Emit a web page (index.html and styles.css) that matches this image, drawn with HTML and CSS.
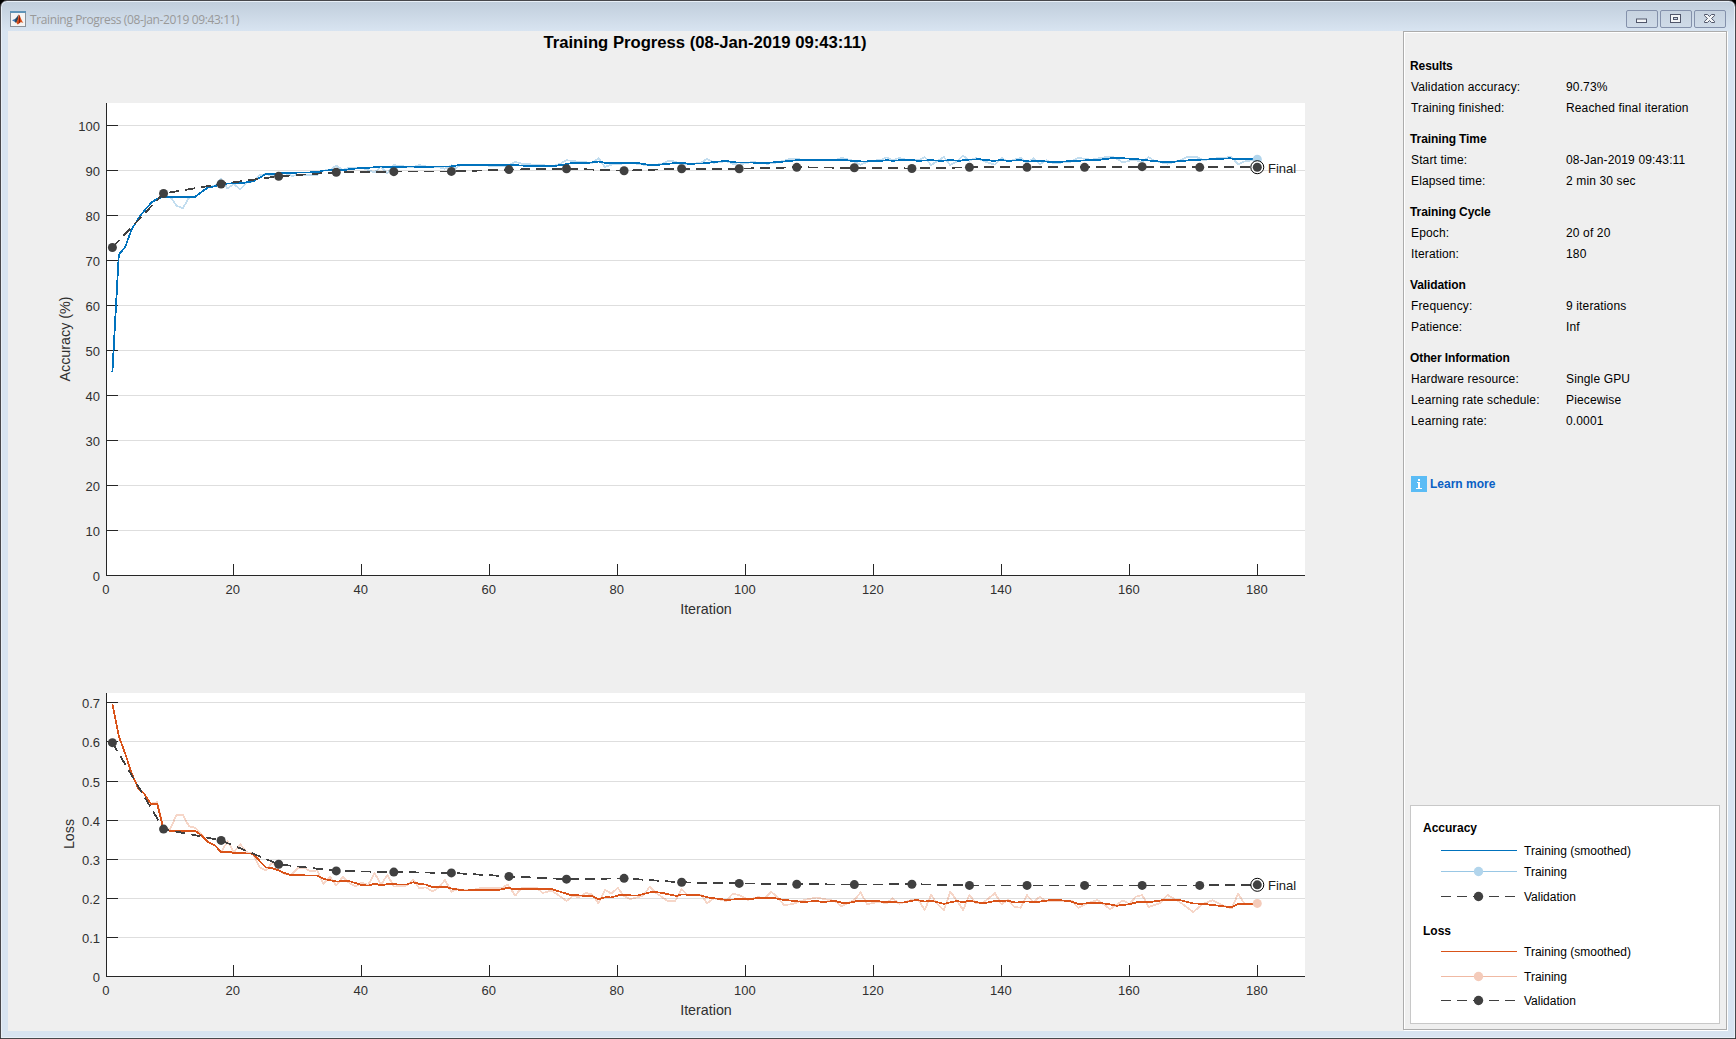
FILE: index.html
```html
<!DOCTYPE html>
<html lang="en">
<head>
    <meta charset="UTF-8">
    <title>Training Progress (08-Jan-2019 09:43:11)</title>
    <link rel="stylesheet" href="styles.css">
</head>
<body>
    <div class="window">
        <header class="titlebar">
            <svg class="app-icon" width="16" height="16" viewBox="0 0 16 16">
                <rect x="0.5" y="0.5" width="15" height="15" fill="#f4f4f4" stroke="#8a9199"/>
                <rect x="0" y="0" width="16" height="2" fill="#5f94b8"/>
                <path d="M2 9.2 5.3 7.8 7 9 5 11z" fill="#3b76b5"/>
                <path d="M5.3 7.8C6.8 7 7.4 4.5 8.8 3.6L8 9 6 12 5 11z" fill="#27475f"/>
                <path d="M8.8 3.6C10.3 4.2 11 9.5 13.4 12 12 11.4 11.3 10.6 10 11.6 9 12.5 8.6 13.4 7.6 13.4L6.2 11.6C7.6 10 8.2 6.5 8.8 3.6z" fill="#d9531e"/>
                <path d="M9 4C9.8 5 10.4 8 10.2 11.4L8.6 12.4C9.2 9.5 9 7 9 4z" fill="#8c1f10"/>
            </svg>
            <span class="caption">Training Progress (08-Jan-2019 09:43:11)</span>
            <div class="controls">
                <button type="button"><svg width="30" height="16"><rect x="9.5" y="8" width="10" height="3.5" fill="#f3f5f7" stroke="#50566a"/></svg></button>
                <button type="button"><svg width="30" height="16"><rect x="9.5" y="3.5" width="10" height="8" fill="#f3f5f7" stroke="#50566a"/><rect x="12.5" y="6.5" width="4" height="2" fill="#c9d5e2" stroke="#50566a"/></svg></button>
                <button type="button"><svg width="30" height="16"><path d="M9.5 3.5h3l2 2 2-2h3v1.2l-3 2.8 3 2.8v1.2h-3l-2-2-2 2h-3v-1.2l3-2.8-3-2.8z" fill="#f3f5f7" stroke="#50566a"/></svg></button>
            </div>
        </header>

        <div class="client">
            <main class="plots">
                <svg id="accuracy" width="1395" height="600" viewBox="8 31 1395 600">
                    <text class="plot-title" x="705" y="47.5" textLength="323" lengthAdjust="spacingAndGlyphs">Training Progress (08-Jan-2019 09:43:11)</text>
                </svg>
                <svg id="loss" width="1395" height="400" viewBox="8 631 1395 400"></svg>
            </main>

            <aside class="panel">
                <section class="group">
                    <h2>Results</h2>
                    <dl>
                        <dt>Validation accuracy:</dt><dd>90.73%</dd>
                        <dt>Training finished:</dt><dd>Reached final iteration</dd>
                    </dl>
                </section>
                <section class="group">
                    <h2>Training Time</h2>
                    <dl>
                        <dt>Start time:</dt><dd>08-Jan-2019 09:43:11</dd>
                        <dt>Elapsed time:</dt><dd>2 min 30 sec</dd>
                    </dl>
                </section>
                <section class="group">
                    <h2>Training Cycle</h2>
                    <dl>
                        <dt>Epoch:</dt><dd>20 of 20</dd>
                        <dt>Iteration:</dt><dd>180</dd>
                    </dl>
                </section>
                <section class="group">
                    <h2>Validation</h2>
                    <dl>
                        <dt>Frequency:</dt><dd>9 iterations</dd>
                        <dt>Patience:</dt><dd>Inf</dd>
                    </dl>
                </section>
                <section class="group">
                    <h2>Other Information</h2>
                    <dl>
                        <dt>Hardware resource:</dt><dd>Single GPU</dd>
                        <dt>Learning rate schedule:</dt><dd>Piecewise</dd>
                        <dt>Learning rate:</dt><dd>0.0001</dd>
                    </dl>
                </section>

                <a class="learn-more" href="#">
                    <svg width="16" height="16">
                        <rect width="16" height="16" fill="#5bbcf5"/>
                        <path d="M7 3h2v2H7zM6 6h3v6h2v1H5v-1h2V7H6z" fill="#fff"/>
                    </svg>
                    Learn more
                </a>

                <div class="legend">
                    <h3>Accuracy</h3>
                    <div class="item">
                        <svg width="76" height="11"><path class="line blue" d="M0 5.5H76"/></svg>
                        Training (smoothed)
                    </div>
                    <div class="item">
                        <svg width="76" height="11"><path class="line light-blue" d="M0 5.5H76"/><circle cx="37.5" cy="5.5" r="4.7" fill="#b2d5ec"/></svg>
                        Training
                    </div>
                    <div class="item tall">
                        <svg width="76" height="11"><path class="line dashed" d="M0 5.5H74"/><circle cx="37.5" cy="5.5" r="4.7" fill="#404040"/></svg>
                        Validation
                    </div>
                    <h3 class="second">Loss</h3>
                    <div class="item">
                        <svg width="76" height="11"><path class="line orange" d="M0 5.5H76"/></svg>
                        Training (smoothed)
                    </div>
                    <div class="item tall">
                        <svg width="76" height="11"><path class="line light-orange" d="M0 5.5H76"/><circle cx="37.5" cy="5.5" r="4.7" fill="#f4cbba"/></svg>
                        Training
                    </div>
                    <div class="item last">
                        <svg width="76" height="11"><path class="line dashed" d="M0 5.5H74"/><circle cx="37.5" cy="5.5" r="4.7" fill="#404040"/></svg>
                        Validation
                    </div>
                </div>
            </aside>
        </div>
    </div>
    <script src="charts.js"></script>
</body>
</html>
```
FILE: styles.css
```css
* {
    margin: 0;
    padding: 0;
    box-sizing: border-box;
}

body {
    background: #000;
    font-family: "Liberation Sans", Arial, sans-serif;
    font-size: 12px;
    color: #000;
    overflow: hidden;
}

.window {
    width: 1736px;
    height: 1039px;
    padding: 0 7px 7px;
    border: 1px solid #47474b;
    border-radius: 7px 7px 0 0;
    background: linear-gradient(#c0cddb, #d8e4f1 30px);
    box-shadow: inset 0 0 0 1px #e8eff7;
}

.titlebar {
    display: flex;
    align-items: center;
    height: 30px;
    padding: 8px 2px 2px;
}

.caption {
    flex: 1;
    margin-left: 4px;
    padding-top: 1px;
    font-family: "Open Sans", sans-serif;
    font-size: 12px;
    letter-spacing: -0.38px;
    color: #999;
}

.controls {
    display: flex;
    gap: 2px;
}

.controls button {
    width: 32px;
    height: 18px;
    border: 1px solid #8491ab;
    border-radius: 2px;
    background: linear-gradient(#c7d3e0, #cfdbe8);
}

.controls svg {
    display: block;
}

.client {
    display: flex;
    height: 1000px;
    background: #efefef;
}

.plots {
    width: 1395px;
}

.plots > svg {
    display: block;
}

.plots text {
    font-size: 13px;
    fill: #303030;
}

.plots .plot-title {
    font-size: 16px;
    font-weight: bold;
    fill: #000;
    text-anchor: middle;
}

.plots .axis-label {
    font-size: 14.3px;
    text-anchor: middle;
}

.plots .final {
    fill: #202020;
}

.grid {
    stroke: #dedede;
    shape-rendering: crispEdges;
}

.axis {
    fill: none;
    stroke: #262626;
    shape-rendering: crispEdges;
}

.series {
    fill: none;
    stroke-width: 1.8;
    stroke-linejoin: round;
    shape-rendering: crispEdges;
}

/* Side panel */
.panel {
    display: flex;
    flex-direction: column;
    width: 324px;
    margin-bottom: 1px;
    padding: 24px 6px 5px;
    border: 1px solid #acacac;
    box-shadow: inset 1px 1px 0 #fff, 1px 1px 0 #fff;
}

.group {
    margin-bottom: 10px;
    line-height: 21px;
}

.group h2 {
    font-size: 12px;
    line-height: 21px;
    letter-spacing: -0.1px;
}

.group dl {
    display: grid;
    grid-template-columns: 155px 1fr;
    padding-left: 1px;
    letter-spacing: 0.14px;
}

.learn-more {
    display: flex;
    align-items: center;
    gap: 3px;
    height: 16px;
    margin: 34px 0 0 1px;
    font-weight: bold;
    color: #0a5fc4;
    text-decoration: none;
}

.legend {
    width: 310px;
    height: 219px;
    margin-top: auto;
    border: 1px solid #c8c8c8;
    background: #fff;
}

.legend h3 {
    height: 34px;
    padding: 10px 0 0 12px;
    font-size: 12px;
    line-height: 24px;
}

.legend .second {
    height: 30px;
    line-height: 20px;
}

.item {
    display: flex;
    align-items: center;
    gap: 7px;
    height: 21px;
    padding-left: 30px;
}

.item.tall {
    height: 29px;
}

.item.last {
    height: 19px;
}

.line {
    stroke-width: 1;
    shape-rendering: crispEdges;
}

.blue {
    stroke: #0072bd;
}

.light-blue {
    stroke: #99c7e5;
}

.orange {
    stroke: #d95319;
}

.light-orange {
    stroke: #f0b9a3;
}

.dashed {
    stroke: #404040;
    stroke-dasharray: 10 6;
}
```
FILE: charts.js
```js
// Series are flat lists: iteration, value, iteration, value, ...
var accuracySmoothed = [
    1, 45.3, 2, 71.3, 3, 73, 4, 76.9, 5.4, 80, 6.3, 81.6, 7.2, 83, 8, 83.7, 9, 84.2, 14, 84.2, 15, 85.3, 16, 86.3, 17, 86.5,
    18, 86.9, 19, 87.1, 21.6, 87.3, 23, 87.6, 24, 88.4, 25, 89.2, 26.5, 89.3, 28, 89.5, 33, 89.6, 34, 90, 37, 90.1,
    39, 90.45, 42, 90.7, 43, 90.9, 44, 90.7, 48, 90.9, 49, 90.7, 52, 90.9, 54, 90.9, 55.5, 91.3, 57, 91.2, 60, 91.2,
    62.6, 91.3, 65, 91.1, 70, 91, 72, 91.4, 73, 91.7, 75.5, 91.7, 77, 92, 78, 91.7, 83.4, 91.6, 85, 91.2, 86.5, 91.3,
    88.6, 91.6, 90, 91.7, 91, 91.5, 94, 91.6, 95, 91.9, 97, 92.1, 98.5, 91.8, 103.5, 91.7, 106, 92, 108, 92.3,
    114.7, 92.4, 116.3, 92.2, 118.3, 92, 121, 92.1, 122, 92.3, 123, 92.15, 125.4, 92.4, 127, 92.15, 129, 92.3,
    130.5, 92.15, 132, 92.3, 133.5, 92.15, 134.5, 92.4, 136.6, 92.5, 138.7, 92.15, 140, 92.3, 141, 92.15, 143, 92.3,
    144.4, 92, 146, 92.15, 148, 91.85, 151.7, 92.15, 153.8, 92.3, 155.4, 92.4, 157.7, 92.8, 160.6, 92.6, 163.2, 92.2,
    166, 91.8, 168.4, 92.15, 170.7, 92.4, 173, 92.5, 175.7, 92.7, 177, 92.5, 180, 92.5
];

var accuracyRaw = [
    10, 84.3, 11, 82.2, 12, 81.6, 13, 84, 14, 84.2, 15, 85.3, 16, 86.3, 17, 86.6, 18, 88.1, 19, 86, 20, 87, 21, 85.8,
    22, 87.3, 23, 87.6, 24, 89, 25, 89.2, 26, 88.8, 27, 89.5, 28, 89.4, 29, 88.8, 30, 89, 33, 89, 34, 90, 35, 90.1, 36, 91.1,
    37, 90.1, 38, 90.6, 40, 90.6, 41, 90.1, 42, 89.6, 43, 90.8, 44, 89.4, 45, 91.2, 46, 91, 48, 90.7, 49, 91.2, 50, 90.9,
    52, 90.7, 53, 90.4, 54, 91.2, 54.6, 90.5, 55.5, 91.2, 62.8, 91, 64, 91.9, 65, 91.5, 70, 91, 71, 91.5, 72, 92.3, 74, 91.9,
    76, 91.7, 77, 92.7, 78, 90.8, 79, 91.3, 82, 91.7, 84, 91.3, 85.5, 91.2, 87, 91.5, 88, 92.15, 89, 92, 90, 91.3,
    91.2, 91.4, 93, 91.7, 94, 92.6, 95, 91.7, 97, 92.1, 98, 91.5, 99, 91.3, 101, 91.9, 103.5, 91.5, 105, 91.8,
    107, 92.6, 108, 92.6, 109, 92.3, 114, 92.3, 115, 92.8, 116.8, 92.15, 118, 91.3, 119.4, 92.15, 121, 92.3,
    122, 92.9, 123, 92.3, 124, 92.8, 125.4, 92.3, 127, 92.3, 128, 93, 129, 91.2, 131, 93, 132, 91.2, 133, 92, 134, 93.3,
    135, 92.15, 136, 92.8, 137.6, 91.9, 139, 91.3, 140, 92.8, 141, 92, 143, 92.8, 144, 91.7, 145, 92.7, 146, 91.4,
    147, 92.3, 148, 91.7, 150.6, 91.8, 152, 92.8, 154, 92.4, 156, 92.9, 157.5, 93, 159, 91.8, 160.6, 92.4, 162, 91.9,
    163, 92.9, 164, 92.15, 166, 91.5, 168, 92.3, 169, 93, 170.5, 93, 171.5, 92.3, 173.6, 92.7, 176, 93, 177, 91.4,
    178, 92, 180, 92.5
];

var accuracyValidation = [
    1, 72.9, 9, 84.9, 18, 87, 27, 88.7, 36, 89.6, 45, 89.75, 54, 89.8, 63, 90.2, 72, 90.4, 81, 89.95, 90, 90.4, 99, 90.4,
    108, 90.7, 117, 90.6, 126, 90.45, 135, 90.7, 144, 90.7, 153, 90.7, 162, 90.85, 171, 90.7, 180, 90.73
];

var lossSmoothed = [
    1, 0.698, 2, 0.615, 3, 0.57, 4, 0.52, 5, 0.482, 6, 0.467, 7, 0.442, 8, 0.442, 9, 0.377, 10, 0.372, 14, 0.372, 15, 0.36,
    16, 0.343, 17, 0.336, 18, 0.318, 19, 0.3195, 20, 0.316, 23, 0.314, 24, 0.296, 25, 0.279, 26, 0.277, 27, 0.271,
    28, 0.264, 29, 0.259, 33, 0.258, 34, 0.2495, 36, 0.243, 38, 0.244, 40, 0.234, 41, 0.2325, 42, 0.2375, 43, 0.233,
    44, 0.236, 47, 0.235, 48, 0.241, 49, 0.237, 50, 0.235, 51, 0.229, 53, 0.23, 54, 0.225, 56, 0.22, 58.5, 0.221,
    61.5, 0.222, 62.8, 0.2265, 64, 0.223, 69.6, 0.224, 71, 0.217, 72.5, 0.209, 76, 0.205, 77, 0.198, 78.2, 0.203,
    79, 0.202, 80.3, 0.2085, 83, 0.207, 85.5, 0.217, 87, 0.2135, 89.2, 0.206, 90, 0.21, 92.8, 0.208, 94, 0.2025,
    97, 0.196, 99, 0.198, 100.6, 0.198, 102.2, 0.201, 104.3, 0.201, 105.8, 0.1965, 109, 0.1905, 111, 0.193, 112, 0.1905,
    114, 0.193, 115.2, 0.188, 116.3, 0.189, 117.8, 0.194, 120.4, 0.194, 121.5, 0.1905, 124.6, 0.189, 126.7, 0.196,
    128, 0.1915, 129, 0.194, 131, 0.186, 133, 0.193, 134, 0.19, 135, 0.194, 137, 0.187, 138.7, 0.192, 140.8, 0.194,
    142.3, 0.189, 144, 0.192, 145.4, 0.19, 148, 0.1965, 150.6, 0.193, 152, 0.1855, 154.8, 0.189, 156.4, 0.186,
    158, 0.181, 160, 0.185, 161.6, 0.1915, 163.7, 0.1915, 165.8, 0.1965, 168, 0.195, 170, 0.187, 171.5, 0.186,
    172.5, 0.184, 176, 0.177, 177, 0.186, 178, 0.185, 180, 0.186
];

var lossRaw = [
    7, 0.442, 8, 0.446, 9, 0.377, 10, 0.377, 11, 0.412, 12, 0.413, 13, 0.384, 14, 0.38, 15, 0.362, 16, 0.343, 17, 0.336,
    18, 0.318, 19, 0.346, 20, 0.318, 21, 0.338, 22, 0.318, 23, 0.314, 24, 0.28, 25, 0.271, 26, 0.292, 27, 0.272,
    28, 0.262, 29, 0.26, 30, 0.278, 31, 0.278, 32, 0.269, 33, 0.271, 34, 0.237, 35, 0.255, 36, 0.2325, 37, 0.255,
    38, 0.24, 39, 0.23, 40, 0.24, 41, 0.234, 42, 0.265, 43, 0.234, 44, 0.26, 45, 0.23, 47, 0.2325, 48, 0.248,
    49, 0.2255, 50, 0.228, 51, 0.218, 52, 0.2265, 53, 0.247, 54, 0.217, 55, 0.223, 57, 0.22, 58.7, 0.227, 62, 0.227,
    62.8, 0.235, 64, 0.207, 65, 0.227, 67.3, 0.227, 68.3, 0.2135, 69.6, 0.22, 70.7, 0.2085, 72, 0.193, 73, 0.206,
    74, 0.203, 75, 0.2135, 76, 0.21, 77, 0.187, 78, 0.222, 79, 0.212, 80, 0.2265, 81, 0.206, 82, 0.198, 84, 0.207,
    85, 0.23, 86, 0.2135, 87.8, 0.193, 89, 0.193, 90, 0.223, 91, 0.208, 93, 0.21, 94, 0.187, 95, 0.2, 97, 0.193,
    98, 0.212, 99, 0.208, 100.4, 0.196, 102, 0.203, 103, 0.2, 104, 0.217, 105, 0.202, 106, 0.183, 107.4, 0.185,
    108.5, 0.193, 111, 0.202, 114, 0.193, 115, 0.179, 117, 0.196, 118, 0.215, 119, 0.185, 121, 0.1915, 122, 0.187,
    123, 0.2, 124, 0.186, 126, 0.196, 127, 0.196, 128, 0.17, 129, 0.209, 130, 0.185, 131, 0.17, 132, 0.217,
    133, 0.195, 134, 0.17, 135, 0.209, 136, 0.187, 137, 0.187, 139, 0.213, 140, 0.185, 141, 0.196, 142, 0.178,
    143, 0.176, 144, 0.208, 145, 0.19, 146, 0.204, 147, 0.1915, 148, 0.193, 151, 0.193, 152, 0.176, 153, 0.184,
    155, 0.196, 157, 0.172, 159, 0.195, 160, 0.185, 161, 0.204, 162, 0.2085, 163, 0.178, 164.7, 0.187, 166, 0.2085,
    168, 0.189, 170, 0.165, 171.5, 0.186, 173, 0.195, 174.5, 0.182, 176, 0.174, 177, 0.212, 178, 0.186, 180, 0.187
];

var lossValidation = [
    1, 0.598, 9, 0.377, 18, 0.348, 27, 0.287, 36, 0.27, 45, 0.267, 54, 0.265, 63, 0.256, 72, 0.249, 81, 0.251, 90, 0.241,
    99, 0.238, 108, 0.236, 117, 0.235, 126, 0.236, 135, 0.233, 144, 0.233, 153, 0.233, 162, 0.233, 171, 0.233, 180, 0.2345
];

var LEFT = 106;
var RIGHT = 1305;

function xPos(iteration) {
    return 106 + iteration * 6.396;
}

function drawChart(id, opt) {
    var svg = document.getElementById(id);
    var out = '';

    function yPos(value) {
        return opt.bottom + 0.5 - value * opt.scale;
    }
    function points(series) {
        var list = [];
        for (var i = 0; i < series.length; i += 2) {
            list.push(xPos(series[i]).toFixed(1) + ',' + yPos(series[i + 1]).toFixed(1));
        }
        return list.join(' ');
    }
    function line(series, color, extra) {
        out += '<polyline class="series" points="' + points(series) + '" stroke="' + color + '" ' + (extra || '') + '/>';
    }

    out += '<rect x="' + LEFT + '" y="' + opt.top + '" width="' + (RIGHT - LEFT) + '" height="' + (opt.bottom - opt.top) + '" fill="#fff"/>';

    // Grid, ticks and tick labels
    opt.ticks.forEach(function (value) {
        var y = Math.floor(yPos(value)) + 0.5;
        if (value > 0) {
            out += '<path class="grid" d="M' + LEFT + ' ' + y + 'H' + RIGHT + '"/>';
            out += '<path class="axis" d="M' + LEFT + ' ' + y + 'h12"/>';
        }
        out += '<text x="100" y="' + (y + 5.5) + '" text-anchor="end">' + value + '</text>';
    });
    for (var i = 0; i <= 180; i += 20) {
        var x = Math.floor(xPos(i)) + 0.5;
        if (i > 0) {
            out += '<path class="axis" d="M' + x + ' ' + opt.bottom + 'v-11"/>';
        }
        out += '<text x="' + (x - 0.7) + '" y="' + (opt.bottom + 19.4) + '" text-anchor="middle">' + i + '</text>';
    }
    out += '<path class="axis" d="M106.5 ' + opt.top + 'V' + (opt.bottom + 0.5) + 'H' + RIGHT + '"/>';

    line(opt.raw, opt.color, 'stroke-opacity="0.24"');
    line(opt.smoothed, opt.color);
    line(opt.validation, '#404040', 'stroke-dasharray="10 6"');

    var lastX = xPos(180);
    var lastY = yPos(opt.validation[opt.validation.length - 1]);
    out += '<circle cx="' + lastX + '" cy="' + yPos(opt.raw[opt.raw.length - 1]) + '" r="4.5" fill="' + opt.lightColor + '"/>';
    out += '<circle cx="' + lastX + '" cy="' + lastY + '" r="6.5" fill="#fff" stroke="#000"/>';
    for (var j = 0; j < opt.validation.length; j += 2) {
        out += '<circle cx="' + xPos(opt.validation[j]) + '" cy="' + yPos(opt.validation[j + 1]) + '" r="4.5" fill="#404040"/>';
    }
    out += '<text class="final" x="1268" y="' + (lastY + 5.5) + '">Final</text>';

    out += '<text class="axis-label" x="706" y="' + (opt.bottom + 39.4) + '">Iteration</text>';
    out += '<text class="axis-label" transform="translate(' + opt.labelX + ' ' + opt.labelY + ') rotate(-90)">' + opt.label + '</text>';

    svg.insertAdjacentHTML('beforeend', out);
}

drawChart('accuracy', {
    top: 103, bottom: 575, scale: 4.5,
    ticks: [0, 10, 20, 30, 40, 50, 60, 70, 80, 90, 100],
    raw: accuracyRaw, smoothed: accuracySmoothed, validation: accuracyValidation,
    color: '#0072bd', lightColor: '#b2d5ec',
    label: 'Accuracy (%)', labelX: 70, labelY: 339
});

drawChart('loss', {
    top: 693, bottom: 976, scale: 391,
    ticks: [0, 0.1, 0.2, 0.3, 0.4, 0.5, 0.6, 0.7],
    raw: lossRaw, smoothed: lossSmoothed, validation: lossValidation,
    color: '#d95319', lightColor: '#f4cbba',
    label: 'Loss', labelX: 74, labelY: 834
});
```
